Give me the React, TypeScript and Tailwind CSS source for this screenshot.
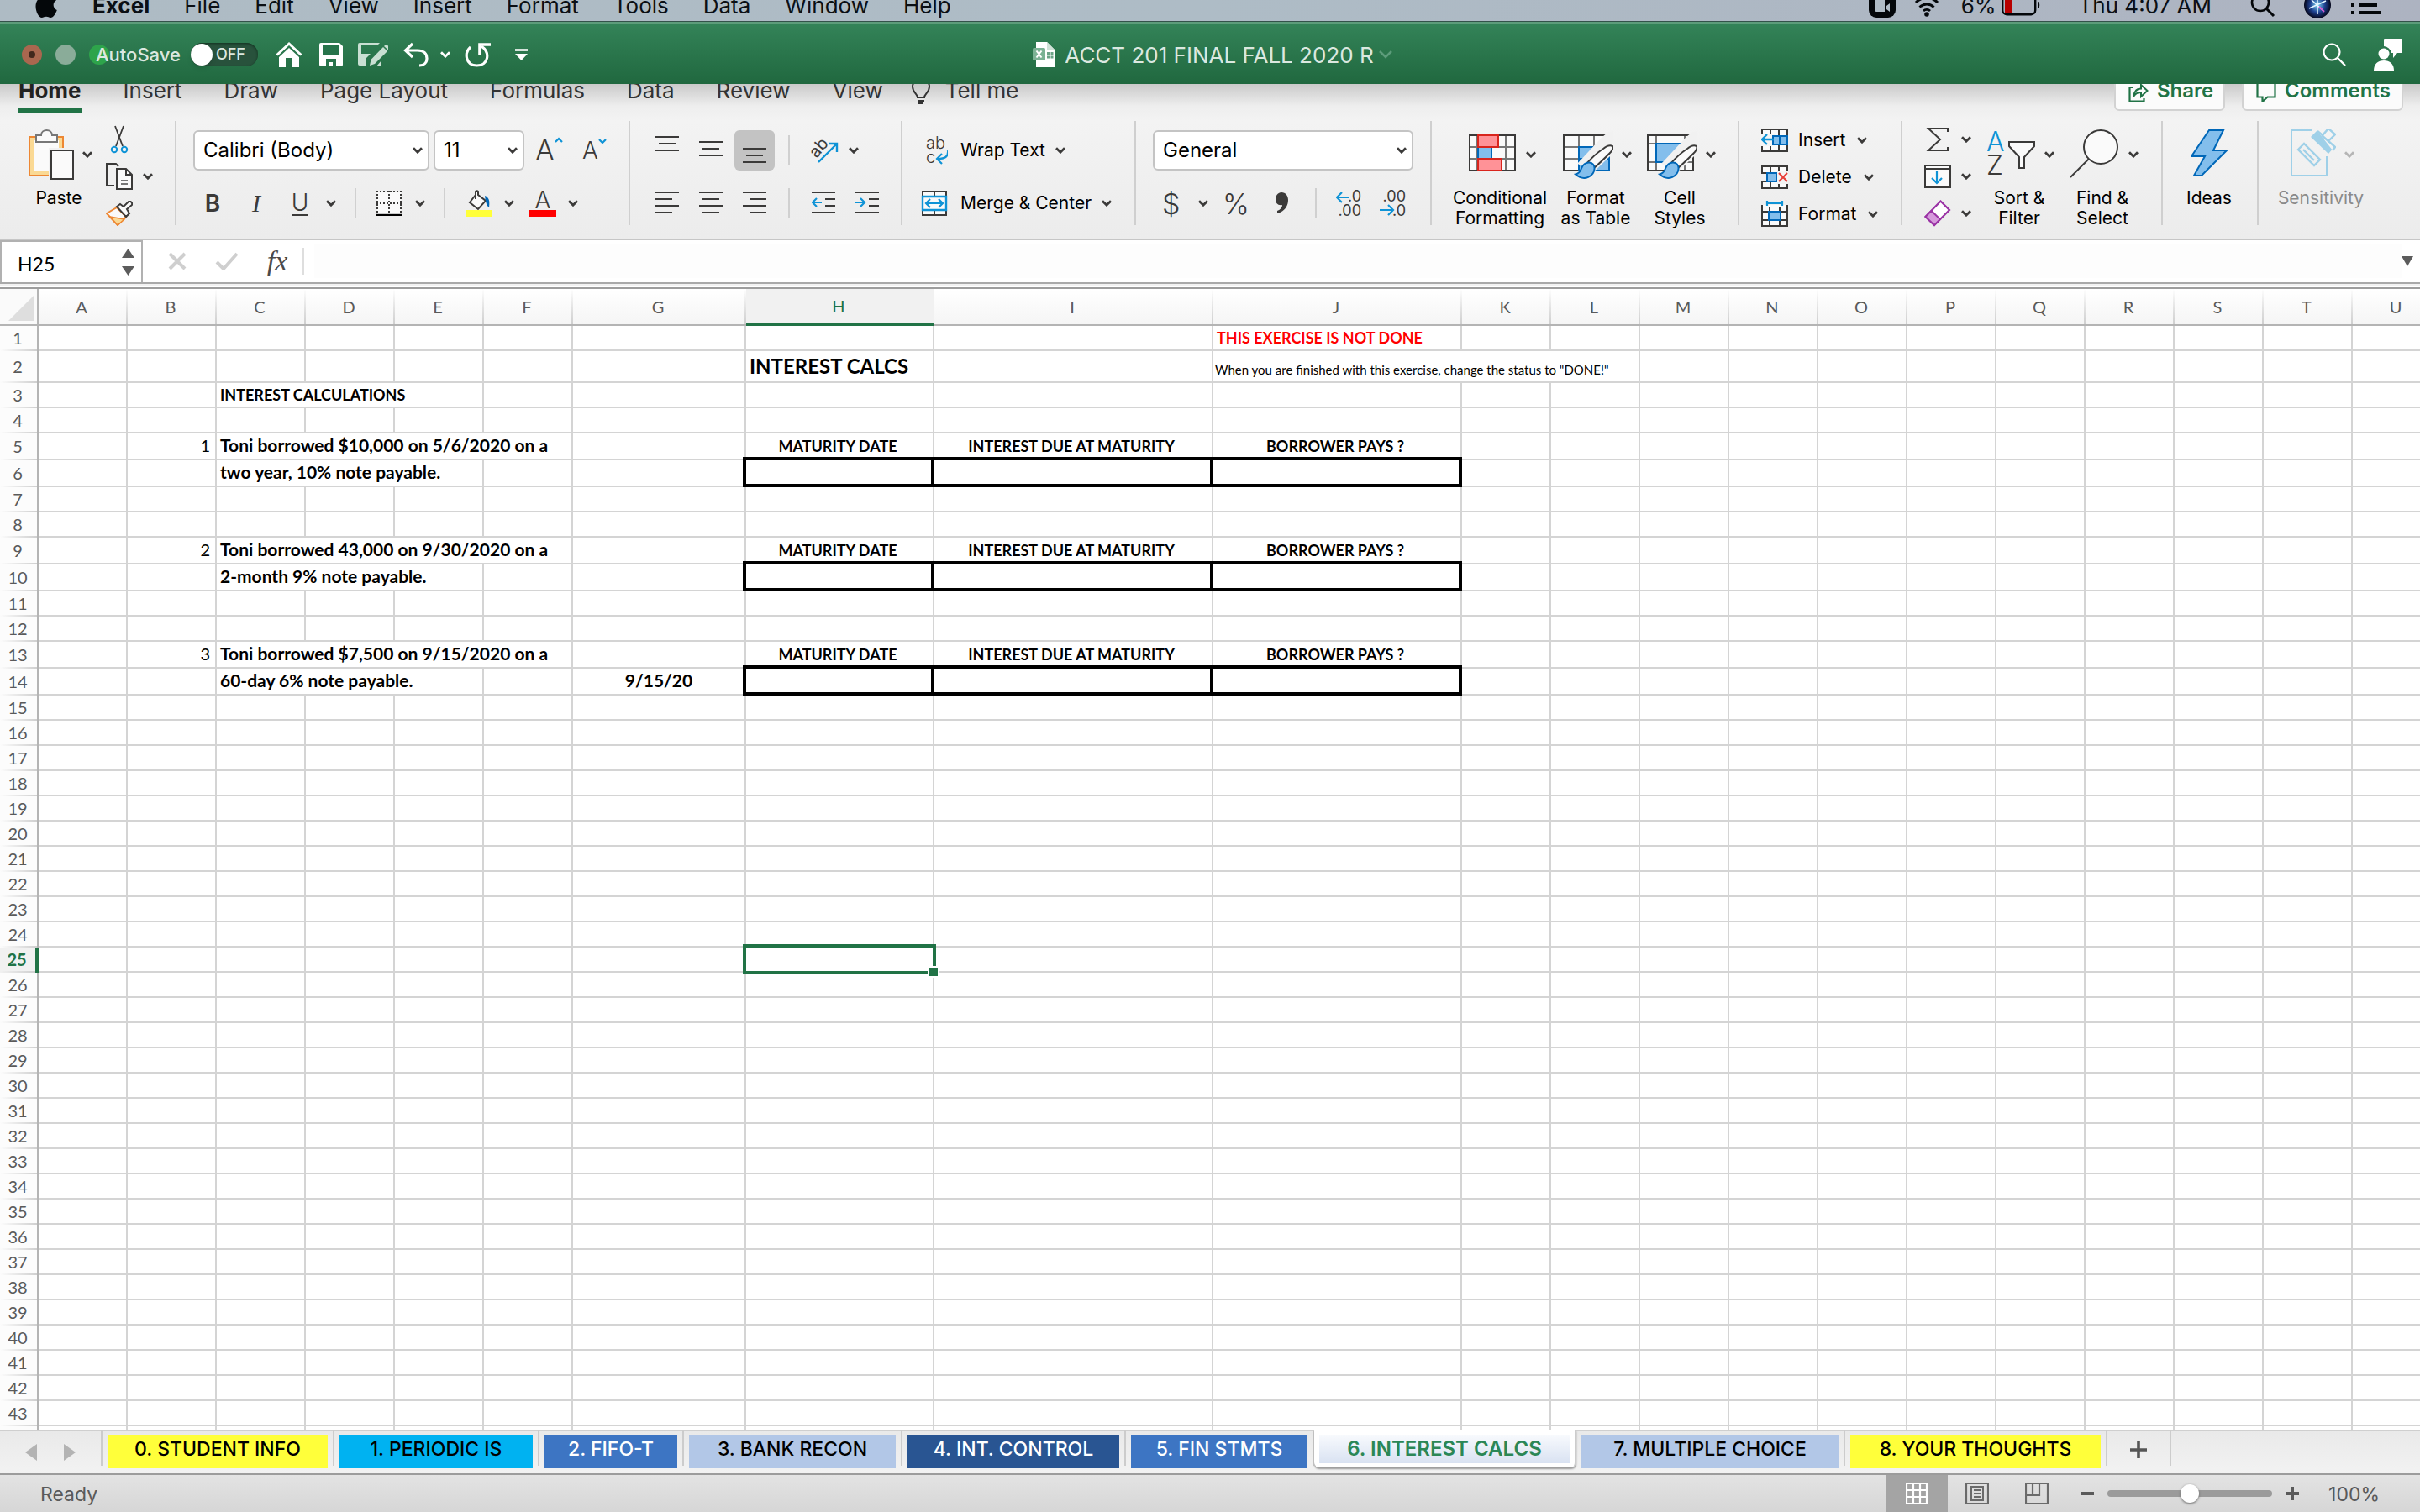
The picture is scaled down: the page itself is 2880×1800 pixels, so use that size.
import React from "react";

const INK = "#3b3a39";
const BLUE = "#0f93d6";
const FILL = "#83beec";
const EDGE = "#0067b8";

type SvgProps = { w: number; h: number; className?: string; children: React.ReactNode };
const Svg = ({ w, h, className = "", children }: SvgProps) => (
  <svg width={w} height={h} viewBox={`0 0 ${w} ${h}`} fill="none" aria-hidden="true" className={"shrink-0 " + className}>
    {children}
  </svg>
);

const Chevron = ({ className = "", color = INK }: { className?: string; color?: string }) => (
  <Svg w={12} h={8} className={className}>
    <path d="M1 1.2 6 6.2 11 1.2" stroke={color} strokeWidth="2.8" />
  </Svg>
);

const Rule = ({ className = "" }: { className?: string }) => (
  <span className={"h-[124px] w-0.5 shrink-0 bg-[#cfcfcf] " + className} />
);
const ShortRule = ({ className = "" }: { className?: string }) => (
  <span className={"h-9 w-0.5 shrink-0 bg-[#d0d0d0] " + className} />
);

/* ---------- system menu bar ---------- */

function MenuBar() {
  return (
    <header className="h-[25px] shrink-0 overflow-hidden bg-linear-to-r from-[#aebbc4] via-[#aebcc6] to-[#adb3c1] text-[26px] text-[#0b0f14]">
      <div className="-mt-4 flex h-11 items-center pr-[46px] pl-[42px]">
        <Svg w={26} h={32} className="mr-[42px]">
          <path
            d="M13 8.5c2 0 3.500-1.500 6-1.500 2.500 0 4.700 1.300 6 3.300-5 3-4.200 9.700.8 11.700-1.300 3.800-4.300 9-7.600 9-2 0-2.800-1.200-5.200-1.200S9.600 31 7.800 31C4.200 31 .5 24 .5 17.500.5 10.800 4.500 7 8.300 7 10.500 7 11.500 8.500 13 8.500zM18 0c.2 3-2.400 6-5.400 6C12.200 3 15 .3 18 0z"
            fill="#04070a"
          />
        </Svg>
        <nav className="flex items-center gap-[41px]">
          <button className="font-bold">Excel</button>
          {["File", "Edit", "View", "Insert", "Format", "Tools", "Data", "Window", "Help"].map((m) => (
            <button key={m}>{m}</button>
          ))}
        </nav>
        <div className="ml-auto flex items-center">
          <Svg w={32} h={32} className="mr-[22px]">
            <rect width="32" height="31" rx="9" fill="#04070a" />
            <path d="M7 9h12v15H9a2 2 0 0 1-2-2zM21 17l4-3v10l-4-3z" fill="#b0bcc6" />
          </Svg>
          <Svg w={30} h={30} className="mr-[26px]">
            <path d="M2 12a18 18 0 0 1 26 0M6.500 17.500a12 12 0 0 1 17 0M11 22a6 6 0 0 1 8 0" stroke="#04070a" strokeWidth="3" />
            <circle cx="15" cy="26" r="2.800" fill="#04070a" />
          </Svg>
          <span className="mr-1.5">6%</span>
          <Svg w={46} h={26} className="mr-[46px]">
            <rect x="1.200" y="1.200" width="39" height="23" rx="5" stroke="#04070a" strokeWidth="2.400" />
            <rect x="4" y="4" width="8" height="18" fill="#b80000" />
            <path d="M43 9c3 1 3 7 0 8z" fill="#04070a" />
          </Svg>
          <time className="mr-[46px]">Thu 4:07 AM</time>
          <Svg w={30} h={30} className="mr-[34px]">
            <circle cx="12" cy="12" r="10" stroke="#04070a" strokeWidth="2.600" />
            <path d="m19 19 9 9" stroke="#04070a" strokeWidth="3" />
          </Svg>
          <Svg w={32} h={32} className="mr-6">
            <defs>
              <radialGradient id="orb">
                <stop offset="0" stopColor="#7fd8f5" />
                <stop offset=".55" stopColor="#1d3f8f" />
                <stop offset="1" stopColor="#05061a" />
              </radialGradient>
            </defs>
            <circle cx="16" cy="16" r="16" fill="url(#orb)" />
            <path d="M6 20 26 11M9 10l14 13M16 5v22" stroke="#e5f6ff" strokeWidth="1.500" />
            <path d="M18 18l6 6" stroke="#d05ad0" strokeWidth="2" />
          </Svg>
          <Svg w={36} h={24}>
            <path d="M0 3h4M0 12h4M0 21h4M9 3h22M9 12h22M9 21h27" stroke="#04070a" strokeWidth="4" />
          </Svg>
        </div>
      </div>
    </header>
  );
}

/* ---------- green title bar ---------- */

function TitleBar() {
  return (
    <div className="flex h-[75px] shrink-0 items-center border-t border-[#33524a] bg-linear-to-b from-[#348459] to-[#20683f] pt-1 pr-5 pl-[26px] text-[#dbe8e0] shadow-[inset_0_2px_0_#5d9c7b]">
      <div className="flex flex-1 items-center">
        <span className="flex size-6 items-center justify-center rounded-full bg-[#a9674f]">
          <span className="size-2 rounded-full bg-[#42281d]" />
        </span>
        <span className="ml-4 size-6 rounded-full bg-[#8aac99]" />
        <span className="ml-4 size-6 rounded-full bg-[#2ea44b]" />
        <label className="-ml-4 flex items-center gap-3 text-[22px] font-medium">
          AutoSave
          <input type="checkbox" className="peer sr-only" />
          <span className="flex h-7 w-20 items-center rounded-full bg-[#28523c] shadow-[inset_0_1px_3px_#12301f]">
            <span className="size-[26px] rounded-full bg-white shadow-md" />
            <span className="ml-1 text-lg">OFF</span>
          </span>
        </label>
        <button aria-label="Home" className="ml-[21px]">
          <Svg w={32} h={32}>
            <path d="M1.500 16.500 16 3l14.500 13.500" stroke="#fff" strokeWidth="3" />
            <path d="M4 19 16 8l12 11v12h-8V20h-8v11H4z" fill="#fff" />
          </Svg>
        </button>
        <button aria-label="Save" className="ml-5">
          <Svg w={28} h={28}>
            <path d="M0 2a2 2 0 0 1 2-2h22l4 4v22a2 2 0 0 1-2 2H2a2 2 0 0 1-2-2z" fill="#fff" />
            <path d="M4 3h20v11H4zM8 19h12v9h-4v-5h-4v5H8z" fill="#27744b" />
          </Svg>
        </button>
        <button aria-label="Save as" className="ml-[18px]">
          <Svg w={36} h={30}>
            <path d="M2 1h24l-3 3H4v10h11l-5 5v9H2a2 2 0 0 1-2-2V3a2 2 0 0 1 2-2z" fill="#c9dfd2" />
            <path d="m14 28 1.500-7L30 6l5 5-15 15z" fill="#c9dfd2" />
            <path d="m31 5 2-2q3 0 3.500 3.500L36 9.500z" fill="#c9dfd2" />
            <path d="M22 29h4a2 2 0 0 0 2-2v-5z" fill="#c9dfd2" />
          </Svg>
        </button>
        <button aria-label="Undo" className="ml-[18px]">
          <Svg w={30} h={30}>
            <path d="M11 2 2.500 10l8.500 8M3 10h14c7 0 11 3.500 11 9.500 0 5-3.500 8.500-9 8.500" stroke="#fff" strokeWidth="3.200" />
          </Svg>
        </button>
        <Chevron color="#fff" className="ml-[14px]" />
        <button aria-label="Redo" className="ml-[17px]">
          <Svg w={32} h={30}>
            <path d="M7 6C-1 13 1 28 14.500 28 28 28 31 13 20 5" stroke="#fff" strokeWidth="3.200" />
            <path d="M18 16V3h13" stroke="#fff" strokeWidth="3.600" />
          </Svg>
        </button>
        <button aria-label="Customize toolbar" className="ml-7">
          <Svg w={15} h={14}>
            <path d="M0 6h15l-7.500 8z" fill="#fff" />
            <path d="M0 1.500h15" stroke="#fff" strokeWidth="2.600" />
          </Svg>
        </button>
      </div>
      <h1 className="flex items-center text-[26px] font-normal">
        <Svg w={26} h={30} className="mr-3">
          <path d="M4 0h13l9 9v21H4z" fill="#fff" />
          <path d="M17 0v9h9z" fill="#cfe2d7" />
          <path d="M17 12h3v3h-3zM21.500 12h3v3h-3zM17 16.500h3v3h-3zM21.500 16.500h3v3h-3z" fill="#6da487" />
          <rect y="7" width="15" height="15" rx="1.500" fill="#7bb294" />
          <path d="m4.500 10.500 6 8M10.500 10.500l-6 8" stroke="#fff" strokeWidth="2" />
        </Svg>
        ACCT 201 FINAL FALL 2020 R
        <Svg w={16} h={10} className="ml-1.5">
          <path d="m1 1 7 7 7-7" stroke="#5d9c7b" strokeWidth="2.500" />
        </Svg>
      </h1>
      <div className="flex flex-1 items-center justify-end">
        <button aria-label="Search">
          <Svg w={28} h={28}>
            <circle cx="11" cy="11" r="9.500" stroke="#fff" strokeWidth="2.200" />
            <path d="m18 18 9 9" stroke="#fff" strokeWidth="2.400" />
          </Svg>
        </button>
        <button aria-label="Account" className="ml-8">
          <Svg w={36} h={38}>
            <path d="M14 1h20a1 1 0 0 1 1 1v15h-6l-5 6v-6h-2a10 10 0 0 0-9-8V2a1 1 0 0 1 1-1z" fill="#fff" />
            <circle cx="13" cy="18" r="6.500" fill="#fff" />
            <path d="M1 38c0-8 5-12 12-12s12 4 12 12z" fill="#fff" />
          </Svg>
        </button>
      </div>
    </div>
  );
}

/* ---------- ribbon ---------- */

function RibbonTabs() {
  return (
    <div className="flex h-11 items-start justify-between overflow-hidden bg-linear-to-b from-[#cacaca] via-[#eeeeee] via-60% to-[#f3f3f3] pr-5 pl-[22px] text-[26px]">
      <nav className="-mt-1.5 flex gap-[50px] leading-7 text-[#333]">
        <button className="border-b-[6px] border-[#217346] pb-1.5 font-bold text-[#222]">Home</button>
        {["Insert", "Draw", "Page Layout", "Formulas", "Data", "Review", "View"].map((t) => (
          <button key={t} className="self-start">
            {t}
          </button>
        ))}
        <button className="-ml-4 flex gap-[18px] self-start">
          <Svg w={22} h={28} className="mt-0.5">
            <path d="M7 20c0-4-6-6-6-13C1 2 5 0 11 0s10 2 10 7c0 7-6 9-6 13zM7 24h8" stroke="#333" strokeWidth="2" />
            <path d="M8 27h6" stroke="#333" strokeWidth="2.500" />
          </Svg>
          Tell me
        </button>
      </nav>
      <div className="-mt-4 flex gap-5 text-2xl font-semibold text-[#217346]">
        <button className="flex h-12 w-[132px] items-end gap-2.5 rounded-md border-2 border-[#d2d2d2] bg-[#fbfbfb] pb-2 pl-[15px] leading-7">
          <Svg w={24} h={24}>
            <path d="M5 6H1.500v16.500h17V19" stroke="#217346" strokeWidth="2.200" />
            <path d="M6 17c1-7 4-9.500 9-9.500V3l7.500 7-7.500 7v-5c-4 0-7 1.500-9 5z" stroke="#217346" strokeWidth="2" />
          </Svg>
          Share
        </button>
        <button className="flex h-12 w-[192px] items-end gap-2.5 rounded-md border-2 border-[#d2d2d2] bg-[#fbfbfb] pb-2 pl-[15px] leading-7">
          <Svg w={24} h={24}>
            <path d="M1.500 0v17.500h6V23l6-5.500h9V0" stroke="#217346" strokeWidth="2.200" />
          </Svg>
          Comments
        </button>
      </div>
    </div>
  );
}

type BigProps = { icon: React.ReactNode; lines: string[]; className: string; chevron?: boolean; muted?: boolean };
function BigButton({ icon, lines, className, chevron = true, muted = false }: BigProps) {
  return (
    <button className={"flex shrink-0 flex-col items-center whitespace-nowrap " + (muted ? "text-[#8a8a8a] " : "") + className}>
      <span className="flex h-20 items-center gap-2.5">
        {icon}
        {chevron && <Chevron color={muted ? "#b5b5b5" : INK} />}
      </span>
      {lines.map((l) => (
        <span key={l} className={"leading-6 " + (chevron ? "pr-1" : "")}>
          {l}
        </span>
      ))}
    </button>
  );
}

function Picker({ label, value, className }: { label: string; value: string; className: string }) {
  return (
    <span className={"relative flex shrink-0 items-center " + className}>
      <select
        aria-label={label}
        defaultValue={value}
        className="h-12 w-full appearance-none rounded-md border-2 border-[#c4c4c4] bg-white pl-2.5 text-2xl text-black"
      >
        <option>{value}</option>
      </select>
      <Chevron className="pointer-events-none absolute right-2" />
    </span>
  );
}

const Lines = ({ d }: { d: string }) => (
  <Svg w={28} h={34}>
    <path d={d} stroke={INK} strokeWidth="2" />
  </Svg>
);

const Brush = () => (
  <>
    <path d="m22 40 26-28c5-5 11-8 12-6s-1 6-6 11L33 46z" fill="#f1f1f1" stroke="#f1f1f1" strokeWidth="6" />
    <path d="M29 42 51 25c4-3 8-5 8.500-4s-.500 4-4 8L38 46z" fill="#fafafa" stroke="#f1f1f1" strokeWidth="5" />
    <path d="M28 41c6-7 14-14 20-18 5-4 9-4 11-3 1 2-1 6-4 9-5 5-11 11-18 17z" fill="#fafafa" stroke={INK} strokeWidth="2" />
    <path d="M15 53.500c4-1 6-4 7-7 2-5 5-7 9-7s7 3 6.500 7.500C37 55 26 63 15 53.500z" fill={FILL} stroke={EDGE} strokeWidth="2" />
  </>
);

function ClipboardGroup() {
  return (
    <>
      <BigButton
        className="w-[76px]"
        lines={["Paste"]}
        icon={
          <Svg w={54} h={60}>
            <path d="M1 9h40v46H1z" fill="#fad994" stroke="#ed8733" strokeWidth="2" />
            <path d="M6 13h30v37H6z" fill="#fafafa" />
            <path d="M9 15V7h6c0-8 13-8 13 0h6v8z" fill="#fafafa" stroke="#777" strokeWidth="2" />
            <path d="M24 22h32v40H24z" fill="#f1f1f1" />
            <path d="M27 25h26v34H27z" fill="#fafafa" stroke={INK} strokeWidth="2" />
          </Svg>
        }
      />
      <div className="ml-4 flex w-14 flex-col">
        <button aria-label="Cut" className="flex h-11 items-center">
          <Svg w={32} h={34}>
            <path d="M11 1 20 25M21 1l-9 24" stroke={INK} strokeWidth="1.800" />
            <circle cx="10" cy="29" r="3.200" stroke={BLUE} strokeWidth="2" />
            <circle cx="22" cy="29" r="3.200" stroke={BLUE} strokeWidth="2" />
          </Svg>
        </button>
        <button aria-label="Copy" className="flex h-11 items-center gap-3">
          <Svg w={32} h={32}>
            <path d="M10 27H1V1h11l3 3" stroke={INK} strokeWidth="2" />
            <path d="M13 7h11l7 7v17H13z" fill="#fafafa" stroke={INK} strokeWidth="2" />
            <path d="M24 7v7h7" stroke={INK} strokeWidth="2" />
            <path d="M18 21h8M18 25h8" stroke="#777" strokeWidth="2" />
          </Svg>
          <Chevron />
        </button>
        <button aria-label="Format painter" className="flex h-11 items-center">
          <Svg w={32} h={30}>
            <path d="M1 15 13 8 24 19 14 29z" fill="#fafafa" stroke="#ed8733" strokeWidth="2" />
            <path d="m5 19 17 3-8 7z" fill="#fad994" stroke="#ed8733" strokeWidth="1.500" />
            <path d="m13 7 4-3 4 3 6-6c2-1 5 1 4 4l-6 5 3 5-4 4z" fill="#fafafa" stroke={INK} strokeWidth="2" />
          </Svg>
        </button>
      </div>
    </>
  );
}

function FontGroup() {
  return (
    <div className="ml-5 flex w-[518px] shrink-0 flex-col">
      <div className="flex h-[70px] items-center">
        <Picker label="Font" value="Calibri (Body)" className="w-[281px]" />
        <Picker label="Font size" value="11" className="ml-[5px] w-[108px]" />
        <button aria-label="Increase font size" className="ml-[13px] flex w-8 text-[34px] leading-8 font-light text-[#3b3a39]">
          A
          <Svg w={10} h={8}>
            <path d="m1 6 4-4 4 4" stroke={BLUE} strokeWidth="2.200" />
          </Svg>
        </button>
        <button aria-label="Decrease font size" className="ml-6 flex w-7 text-[28px] leading-10 font-light text-[#3b3a39]">
          A
          <Svg w={10} h={14}>
            <path d="m1 7 4 4 4-4" stroke={BLUE} strokeWidth="2.200" />
          </Svg>
        </button>
      </div>
      <div className="flex h-14 items-center text-[28px] text-[#3b3a39]">
        <button aria-label="Bold" className="ml-2 w-[30px] font-semibold">B</button>
        <button aria-label="Italic" className="ml-[22px] w-[30px] font-['Liberation_Serif'] text-3xl italic">I</button>
        <button aria-label="Underline" className="ml-[22px] flex w-[30px] flex-col items-center leading-7 font-light">
          <span className="border-b-2 border-[#3b3a39]">U</span>
        </button>
        <Chevron className="ml-4" />
        <ShortRule className="ml-[22px]" />
        <button aria-label="Borders" className="ml-6">
          <Svg w={30} h={30}>
            <path d="M1 1h28v28H1z" fill="#fafafa" />
            <path d="M0 1h30M1 0v28M29 0v28M15 0v28M0 15h30" stroke={INK} strokeWidth="2" strokeDasharray="2 2" />
            <path d="M0 29h30" stroke="#000" strokeWidth="2.400" />
          </Svg>
        </button>
        <Chevron className="ml-4" />
        <ShortRule className="ml-[22px]" />
        <button aria-label="Fill color" className="ml-6">
          <Svg w={32} h={32}>
            <path d="M12 6 5 15l10 8 9-10-9-7V2a2 2 0 0 0-3 0v9" fill="#fafafa" stroke={INK} strokeWidth="2" />
            <path d="M23 7c5 2 6 6 5 14-3-2-4-6-5-14z" fill={EDGE} />
            <path d="M0 24h32v8H0z" fill="#ffff3a" />
          </Svg>
        </button>
        <Chevron className="ml-3.5" />
        <button aria-label="Font color" className="ml-[18px] flex w-8 flex-col items-center leading-6 font-light">
          A
          <span className="h-2 w-8 bg-[#ff0000]" />
        </button>
        <Chevron className="ml-3.5" />
      </div>
    </div>
  );
}

function AlignmentGroup() {
  return (
    <div className="ml-[30px] flex w-[292px] shrink-0 flex-col">
      <div className="flex h-[70px] items-center">
        <button aria-label="Top align"><Lines d="M0 1h28M4 9h20M0 17h28" /></button>
        <button aria-label="Middle align" className="ml-6"><Lines d="M0 7h28M4 15h20M0 23h28" /></button>
        <button aria-label="Bottom align" className="ml-3.5 flex size-12 items-center justify-center rounded-md bg-[#c3c3c3]">
          <Lines d="M0 15h28M4 23h20M0 31h28" />
        </button>
        <ShortRule className="ml-4" />
        <button aria-label="Orientation" className="ml-6">
          <Svg w={34} h={34}>
            <text x="4" y="25" fontSize="20" fill={INK} transform="rotate(-50 8 22)">ab</text>
            <path d="M10 31 31 10M22 9h10v10" stroke={BLUE} strokeWidth="2.400" />
          </Svg>
        </button>
        <Chevron className="ml-3" />
      </div>
      <div className="flex h-14 items-center">
        <button aria-label="Align left"><Lines d="M0 4h28M0 12h20M0 20h28M0 28h20" /></button>
        <button aria-label="Center" className="ml-6"><Lines d="M0 4h28M4 12h20M0 20h28M4 28h20" /></button>
        <button aria-label="Align right" className="ml-6"><Lines d="M0 4h28M8 12h20M0 20h28M8 28h20" /></button>
        <ShortRule className="ml-[26px]" />
        <button aria-label="Decrease indent" className="ml-[26px]">
          <Svg w={28} h={28}>
            <path d="M0 1h28M16 9h12M16 17h12M0 25h28" stroke={INK} strokeWidth="2" />
            <path d="M12 13H1M6 8l-5 5 5 5" stroke={BLUE} strokeWidth="2.200" />
          </Svg>
        </button>
        <button aria-label="Increase indent" className="ml-6">
          <Svg w={28} h={28}>
            <path d="M0 1h28M16 9h12M16 17h12M0 25h28" stroke={INK} strokeWidth="2" />
            <path d="M0 13h11M6 8l5 5-5 5" stroke={BLUE} strokeWidth="2.200" />
          </Svg>
        </button>
      </div>
    </div>
  );
}

function WrapGroup() {
  return (
    <div className="ml-[22px] flex w-[254px] shrink-0 flex-col">
      <button className="flex h-[70px] items-center">
        <Svg w={32} h={34} className="mr-[15px]">
          <text x="6" y="15" fontSize="20" fontWeight="300" fill={INK}>ab</text>
          <text x="6" y="32" fontSize="20" fontWeight="300" fill={INK}>c</text>
          <path d="M32 17c1 8-4 10-12 10M25 21l-6 6 6 6" stroke={BLUE} strokeWidth="2.200" />
        </Svg>
        Wrap Text
        <Chevron className="ml-3" />
      </button>
      <button className="flex h-14 items-center">
        <Svg w={32} h={30} className="mr-[15px]">
          <path d="M2 1h28v28H2zM16 1v28" fill="#fafafa" stroke={INK} strokeWidth="2" />
          <path d="M2 7h28v16H2z" fill="#fafafa" stroke={BLUE} strokeWidth="2.400" />
          <path d="M6 15h20M11 10l-5 5 5 5M21 10l5 5-5 5" stroke={BLUE} strokeWidth="2.200" />
        </Svg>
        Merge &amp; Center
        <Chevron className="ml-3" />
      </button>
    </div>
  );
}

function NumberGroup() {
  return (
    <div className="ml-5 flex w-[330px] shrink-0 flex-col">
      <div className="flex h-[70px] items-center">
        <Picker label="Number format" value="General" className="w-[310px]" />
      </div>
      <div className="flex h-14 items-center text-[34px] font-light text-[#3b3a39]">
        <button aria-label="Currency" className="ml-[11px] w-5">$</button>
        <Chevron className="ml-[23px]" />
        <button aria-label="Percent" className="ml-[17px] w-8">%</button>
        <button aria-label="Comma style" className="ml-[30px]">
          <Svg w={16} h={28}>
            <path d="M8 1c5 0 8 4 8 9 0 8-5 14-13 16v-3c4-1.500 6-4 6-7-5 1-8-2-8-7 0-4 3-8 7-8z" fill={INK} />
          </Svg>
        </button>
        <ShortRule className="ml-8" />
        <button aria-label="Increase decimal" className="ml-[23px]">
          <Svg w={32} h={32}>
            <text x="30" y="14" fontSize="18" textAnchor="end" fill={INK} fontWeight="400">.0</text>
            <text x="30" y="31" fontSize="18" textAnchor="end" fill={INK} fontWeight="400">.00</text>
            <path d="M15 9H1M7 3 1 9l6 6" stroke={BLUE} strokeWidth="2.200" />
          </Svg>
        </button>
        <button aria-label="Decrease decimal" className="ml-5">
          <Svg w={32} h={32}>
            <text x="31" y="14" fontSize="18" textAnchor="end" fill={INK} fontWeight="400">.00</text>
            <text x="31" y="31" fontSize="18" textAnchor="end" fill={INK} fontWeight="400">.0</text>
            <path d="M0 24h15M10 18l6 6-6 6" stroke={BLUE} strokeWidth="2.200" />
          </Svg>
        </button>
      </div>
    </div>
  );
}

function StylesGroup() {
  return (
    <>
      <BigButton
        className="ml-[27px] w-[112px]"
        lines={["Conditional", "Formatting"]}
        icon={
          <Svg w={60} h={60}>
            <path d="M3 7h54v42H3z" fill="#fafafa" />
            <path d="M2 21h56M2 35h56M12 7v42M46 7v42" stroke="#777" strokeWidth="2" />
            <path d="M3 7h54v42H3z" stroke={INK} strokeWidth="2" />
            <path d="M13 21h16v14H13z" fill={FILL} stroke={EDGE} strokeWidth="2" />
            <path d="M13 7h24v14H13zM13 35h28v14H13z" fill="#ff9297" stroke="#d9251d" strokeWidth="2" />
          </Svg>
        }
      />
      <BigButton
        className="ml-[17px] w-[82px]"
        lines={["Format", "as Table"]}
        icon={
          <Svg w={60} h={60}>
            <path d="M1 7h54v42H1z" fill="#fafafa" />
            <path d="M0 21h54M0 35h20M19 7v42M37 7v14" stroke="#777" strokeWidth="2" />
            <path d="M20 49H1V7h54v14" stroke={INK} strokeWidth="2" />
            <path d="M19 21h36v28H19zM37 21v28M19 35h36" fill={FILL} stroke={EDGE} strokeWidth="2" />
            <Brush />
          </Svg>
        }
      />
      <BigButton
        className="ml-[18px] w-[82px]"
        lines={["Cell", "Styles"]}
        icon={
          <Svg w={60} h={60}>
            <path d="M1 7h54v42H1z" fill="#fafafa" />
            <path d="M0 17h54M0 39h54M11 7v42M45 7v42" stroke="#777" strokeWidth="2" />
            <path d="M1 7h54v42H1z" stroke={INK} strokeWidth="2" />
            <path d="M11 17h34v22H11z" fill={FILL} stroke={EDGE} strokeWidth="2" />
            <Brush />
          </Svg>
        }
      />
    </>
  );
}

function CellsGroup() {
  return (
    <div className="ml-[26px] flex w-[166px] shrink-0 flex-col pt-px">
      <button className="flex h-11 items-center">
        <Svg w={32} h={28} className="mr-3">
          <path d="M1 1h30v26H1zM11 1v26M21 1v26M1 9h30M1 19h30" fill="#fafafa" stroke={INK} strokeWidth="2" />
          <path d="M0 6h16v15H0z" fill="#f4f4f4" />
          <path d="M14 9h17v10H14zM22 9v10" fill={FILL} stroke={EDGE} strokeWidth="2" />
          <path d="M15 13H1M7 7l-6 6 6 6" stroke={BLUE} strokeWidth="2.400" />
        </Svg>
        Insert
        <Chevron className="ml-3.5" />
      </button>
      <button className="flex h-11 items-center">
        <Svg w={32} h={28} className="mr-3">
          <path d="M1 9V1h30v8zM1 19v8h30v-8zM11 1v8M21 1v8M11 19v8M21 19v8" fill="#fafafa" stroke={INK} strokeWidth="2" />
          <path d="M7 9h11v10H7z" fill={FILL} stroke={EDGE} strokeWidth="2" />
          <path d="M19 6h13v16H19z" fill="#f4f4f4" />
          <path d="m21 9 10 10M31 9 21 19" stroke="#e8403a" strokeWidth="2.200" />
        </Svg>
        Delete
        <Chevron className="ml-3.5" />
      </button>
      <button className="flex h-11 items-center">
        <Svg w={32} h={32} className="mr-3">
          <path d="M1 5v25h30V5M1 13h30M1 23h30M10 8v22M22 8v22" fill="#fafafa" stroke={INK} strokeWidth="2" />
          <path d="M9 13h14v10H9z" fill={FILL} stroke={EDGE} strokeWidth="2" />
          <path d="M7 3h18M7 0v6M25 0v6" stroke={BLUE} strokeWidth="2.200" />
        </Svg>
        Format
        <Chevron className="ml-3.5" />
      </button>
    </div>
  );
}

function EditingGroup() {
  return (
    <>
      <div className="ml-[26px] flex w-14 shrink-0 flex-col">
        <button aria-label="AutoSum" className="flex h-11 items-center gap-3">
          <Svg w={32} h={28}>
            <path d="M28 5V1H5l14 13L5 27h23v-4" stroke={INK} strokeWidth="2" />
          </Svg>
          <Chevron />
        </button>
        <button aria-label="Fill" className="flex h-11 items-center gap-3">
          <Svg w={32} h={28}>
            <path d="M1 1h30v26H1zM1 5h30" fill="#fafafa" stroke={INK} strokeWidth="2" />
            <path d="M15 8v14M9 16l6 6 6-6" stroke={BLUE} strokeWidth="2.200" />
          </Svg>
          <Chevron />
        </button>
        <button aria-label="Clear" className="flex h-11 items-center gap-3">
          <Svg w={32} h={32}>
            <path d="m1.500 20 18-18.500L30 12 12 30z" fill="#fff" stroke="#9a33a5" strokeWidth="2.200" />
            <path d="m1.500 20 7-7L19 23l-7 7z" fill="#d69bdc" stroke="#9a33a5" strokeWidth="2" />
          </Svg>
          <Chevron />
        </button>
      </div>
      <BigButton
        className="ml-[18px] w-[82px]"
        lines={["Sort &", "Filter"]}
        icon={
          <Svg w={58} h={60}>
            <text x="-1" y="26" fontSize="32" fontWeight="300" fill={BLUE}>A</text>
            <text x="-1" y="54" fontSize="32" fontWeight="300" fill={INK}>Z</text>
            <path d="M26 15h30v5L44 33v13h-6V33L26 20z" fill="#fafafa" stroke={INK} strokeWidth="2" />
          </Svg>
        }
      />
      <BigButton
        className="ml-4 w-[84px]"
        lines={["Find &", "Select"]}
        icon={
          <Svg w={60} h={60}>
            <circle cx="37" cy="21" r="20" fill="#fafafa" stroke={INK} strokeWidth="2" />
            <path d="M23 35 1 57" stroke={INK} strokeWidth="2" />
          </Svg>
        }
      />
    </>
  );
}

function Ribbon() {
  return (
    <section className="shrink-0 border-b-2 border-[#c6c6c6] bg-[#efefef]">
      <RibbonTabs />
      <div className="flex h-[140px] items-start bg-linear-to-b from-[#f3f3f3] to-[#ececec] pl-[34px] text-[21px] text-black">
        <ClipboardGroup />
        <Rule className="ml-[26px]" />
        <FontGroup />
        <Rule />
        <AlignmentGroup />
        <Rule />
        <WrapGroup />
        <Rule />
        <NumberGroup />
        <Rule />
        <StylesGroup />
        <Rule className="ml-[26px]" />
        <CellsGroup />
        <Rule />
        <EditingGroup />
        <Rule className="ml-[26px]" />
        <BigButton
          className="ml-[27px] w-14"
          lines={["Ideas"]}
          chevron={false}
          icon={
            <Svg w={44} h={60}>
              <path d="M22 1h17L27 25h16L13 55H4l13-23H1z" fill={FILL} stroke={EDGE} strokeWidth="2" />
            </Svg>
          }
        />
        <Rule className="ml-[29px]" />
        <BigButton
          className="ml-6 w-[104px]"
          lines={["Sensitivity"]}
          muted
          icon={
            <Svg w={54} h={60}>
              <path d="M25 1H1v54h42V32" stroke="#9fd0e8" strokeWidth="2" />
              <path d="m9 24 7-7 19 19-7 7zM15 24l13 13" stroke="#9fd0e8" strokeWidth="2.400" />
              <path d="m24 9 7-7 21 19-7 8z" fill="#9fd0e8" />
              <path d="m32 2 6 5 7-8 8 7-8 8 8 7-3 4M37 7l9 8" stroke="#9fd0e8" strokeWidth="2.400" fill="#f4f4f4" />
            </Svg>
          }
        />
      </div>
    </section>
  );
}

/* ---------- formula bar ---------- */

function FormulaBar() {
  return (
    <div className="flex h-[58px] shrink-0 items-stretch border-b-2 border-[#9d9d9d] bg-white">
      <div className="mb-1 flex flex-1 items-center border-b-2 border-[#a9a9a9] shadow-[0_2px_0_#f2f2f2]">
        <div className="flex h-full w-[170px] items-center justify-between border-2 border-b-0 border-[#b1b1b1] pr-2 pl-[19px]">
          <input aria-label="Name box" defaultValue="H25" className="w-24 bg-transparent pt-1 font-['Lato'] text-[23px] text-black" />
          <span className="flex flex-col gap-2.5">
            <Svg w={15} h={11}><path d="M7.500 0 15 11H0z" fill="#5c5c5c" /></Svg>
            <Svg w={15} h={11}><path d="M7.500 11 0 0h15z" fill="#5c5c5c" /></Svg>
          </span>
        </div>
        <button aria-label="Cancel" className="ml-[30px]">
          <Svg w={22} h={22}><path d="m2 2 18 18M20 2 2 20" stroke="#cfcfcf" strokeWidth="4" /></Svg>
        </button>
        <button aria-label="Enter" className="ml-[34px]">
          <Svg w={28} h={22}><path d="m2 12 8 8L26 2" stroke="#cfcfcf" strokeWidth="4" /></Svg>
        </button>
        <button aria-label="Insert function" className="ml-8 w-7 font-['Liberation_Serif'] text-[34px] leading-8 text-[#4a4a4a] italic">
          fx
        </button>
        <span className="ml-4 h-8 w-0.5 bg-[#dedede]" />
        <input aria-label="Formula" className="ml-3 h-10 flex-1 bg-[#fdfdfd]" />
        <button aria-label="Expand formula bar" className="mr-2">
          <Svg w={14} h={12}><path d="M7 12 0 0h14z" fill="#5c5c5c" /></Svg>
        </button>
      </div>
    </div>
  );
}

/* ---------- worksheet ---------- */

const COLUMNS: [string, string][] = [
  ["A", "w-[106px]"], ["B", "w-[106px]"], ["C", "w-[106px]"], ["D", "w-[106px]"], ["E", "w-[106px]"], ["F", "w-[106px]"],
  ["G", "w-[206px]"], ["H", "w-[224px]"], ["I", "w-[332px]"], ["J", "w-[296px]"], ["K", "w-[106px]"], ["L", "w-[106px]"],
  ["M", "w-[106px]"], ["N", "w-[106px]"], ["O", "w-[106px]"], ["P", "w-[106px]"], ["Q", "w-[106px]"], ["R", "w-[106px]"],
  ["S", "w-[106px]"], ["T", "w-[106px]"], ["U", "w-[106px]"],
];

type Cell = { text?: string; span?: number; style?: string; kind?: "boxed" | "active" };

const NOTE = "pl-1 pb-1 text-[21px] font-bold";
const CAPS = "pl-1 text-lg font-bold";
const HEAD = "pr-1 text-center text-lg font-bold";
const COUNT = "pr-1.5 pb-0.5 text-right text-xl";

const headings = { H: { text: "MATURITY DATE", style: HEAD }, I: { text: "INTEREST DUE AT MATURITY", style: HEAD }, J: { text: "BORROWER PAYS ?", style: HEAD } };
const boxes: Record<string, Cell> = { H: { kind: "boxed" }, I: { kind: "boxed" }, J: { kind: "boxed" } };

const CELLS: Record<number, Record<string, Cell>> = {
  1: { J: { text: "THIS EXERCISE IS NOT DONE", style: CAPS + " text-[#ff0000]" } },
  2: {
    H: { text: "INTEREST CALCS", style: "pl-1 text-[24px] font-bold" },
    J: { text: 'When you are finished with this exercise, change the status to "DONE!"', span: 3, style: "pl-0.5 pt-2 text-[15px]" },
  },
  3: { C: { text: "INTEREST CALCULATIONS", span: 3, style: CAPS } },
  5: { B: { text: "1", style: COUNT }, C: { text: "Toni borrowed $10,000 on 5/6/2020 on a", span: 4, style: NOTE }, ...headings },
  6: { C: { text: "two year, 10% note payable.", span: 3, style: NOTE }, ...boxes },
  9: { B: { text: "2", style: COUNT }, C: { text: "Toni borrowed 43,000 on 9/30/2020 on a", span: 4, style: NOTE }, ...headings },
  10: { C: { text: "2-month 9% note payable.", span: 3, style: NOTE }, ...boxes },
  13: { B: { text: "3", style: COUNT }, C: { text: "Toni borrowed $7,500 on 9/15/2020 on a", span: 4, style: NOTE }, ...headings },
  14: {
    C: { text: "60-day 6% note payable.", span: 3, style: NOTE },
    G: { text: "9/15/20", style: "pb-1 text-center text-[21px] font-bold" },
    ...boxes,
  },
  25: { H: { kind: "active" } },
};

const TALL = [5, 6, 9, 10, 13, 14];
const rowHeight = (n: number) => (n === 2 ? "h-[38px]" : TALL.includes(n) ? "h-8" : "h-[30px]");

function SheetRow({ n }: { n: number }) {
  const row = CELLS[n] ?? {};
  const cells: React.ReactNode[] = [];
  for (let i = 0; i < COLUMNS.length; i++) {
    const name = COLUMNS[i][0];
    const c = row[name] ?? {};
    const border = c.kind === "boxed" ? "border-0" : "border-r-2 border-b-2 border-[#d4d4d4]";
    cells.push(
      <td key={name} colSpan={c.span ?? 1} className={"relative p-0 align-middle leading-none whitespace-nowrap " + border + " " + (c.style ?? "")}>
        {c.text}
        {c.kind === "boxed" && <span className="absolute -top-1 right-0 bottom-0 -left-1 z-10 border-4 border-black" />}
        {c.kind === "active" && (
          <span className="absolute -top-1 -right-1 -bottom-1 -left-1 z-10 border-4 border-[#217346]">
            <span className="absolute -right-[8px] -bottom-[8px] size-3.5 border-2 border-white bg-[#217346]" />
          </span>
        )}
      </td>,
    );
    i += (c.span ?? 1) - 1;
  }
  const selected = n === 25;
  return (
    <tr className={rowHeight(n)}>
      <th
        scope="row"
        className={
          "bg-[linear-gradient(to_right,transparent,#cfcfcf)] bg-[length:100%_2px] bg-bottom bg-no-repeat p-0 pr-0.5 pb-0.5 text-center text-xl leading-none " +
          (selected ? "border-r-4 border-[#217346] bg-[#f1f1f1] font-bold text-[#217346]" : "border-r-2 border-[#b4b4b4] bg-[#fcfcfc] font-normal text-[#5a5a5a]")
        }
      >
        {n < 44 ? n : ""}
      </th>
      {cells}
    </tr>
  );
}

function Sheet() {
  return (
    <main className="min-h-0 flex-1 overflow-hidden bg-white font-['Lato'] text-black">
      <table className="w-full table-fixed border-separate border-spacing-0">
        <colgroup>
          <col className="w-[46px]" />
          {COLUMNS.map(([name, w]) => (
            <col key={name} className={w} />
          ))}
        </colgroup>
        <thead>
          <tr className="h-11">
            <th className="border-r-2 border-b-2 border-[#b4b4b4] bg-[#fafafa] p-0 align-bottom">
              <Svg w={30} h={30} className="mb-1 ml-2.5">
                <path d="M30 0v30H0z" fill="#dedede" />
              </Svg>
            </th>
            {COLUMNS.map(([name]) => (
              <th
                key={name}
                scope="col"
                className={
                  "p-0 pr-1 text-center text-xl leading-none font-normal " +
                  (name === "H"
                    ? "border-b-4 border-[#217346] bg-[#f1f1f1] text-[#217346]"
                    : "border-b-2 border-[#b4b4b4] bg-[linear-gradient(to_bottom,transparent,#cfcfcf),linear-gradient(to_bottom,#ffffff,#f5f5f5)] bg-[length:2px_100%,100%_100%] bg-right bg-no-repeat text-[#5a5a5a]")
                }
              >
                {name}
              </th>
            ))}
          </tr>
        </thead>
        <tbody>
          {Array.from({ length: 44 }, (_, i) => (
            <SheetRow key={i} n={i + 1} />
          ))}
        </tbody>
      </table>
    </main>
  );
}

/* ---------- sheet tabs and status bar ---------- */

const TABS: [string, string][] = [
  ["0. STUDENT INFO", "w-[262px] bg-[#ffff3a] text-black"],
  ["1. PERIODIC IS", "w-[230px] bg-[#00b2f1] text-black"],
  ["2. FIFO-T", "w-[158px] bg-[#3d75c3] text-white"],
  ["3. BANK RECON", "w-[246px] bg-[#b2c7e7] text-black"],
  ["4. INT. CONTROL", "w-[252px] bg-[#295592] text-white"],
  ["5. FIN STMTS", "w-[210px] bg-[#3d75c3] text-white"],
  ["6. INTEREST CALCS", "active"],
  ["7. MULTIPLE CHOICE", "w-[306px] bg-[#b2c7e7] text-black"],
  ["8. YOUR THOUGHTS", "w-[298px] bg-[#ffff3a] text-black"],
];

function SheetTabs() {
  return (
    <nav className="flex h-[52px] shrink-0 items-start bg-linear-to-b from-[#e9e9e9] to-[#f2f2f2] text-[23px] font-medium shadow-[inset_0_2px_0_#cfcfcf]">
      <button aria-label="Previous sheet" className="mt-[17px] ml-[30px]">
        <Svg w={14} h={20}><path d="M14 0v20L0 10z" fill="#b3b3b3" /></Svg>
      </button>
      <button aria-label="Next sheet" className="mt-[17px] ml-8">
        <Svg w={14} h={20}><path d="M0 0v20l14-10z" fill="#b3b3b3" /></Svg>
      </button>
      <span className="ml-[30px] h-[43px] w-0.5 bg-[#cccccc]" />
      {TABS.map(([name, look]) =>
        look === "active" ? (
          <div key={name} className="h-[45px] rounded-b-md border-r-2 border-[#cccccc] bg-white px-1.5 pt-1.5 shadow-[0_2px_2px_#9a9a9a]">
            <button className="h-[34px] w-[298px] bg-linear-to-b from-[#f8fafd] to-[#d9e2f2] text-2xl leading-[34px] font-semibold text-[#2b8756]">
              {name}
            </button>
          </div>
        ) : (
          <div key={name} className="h-[43px] border-r-2 border-[#cccccc] px-1.5 pt-1.5">
            <button className={"h-10 pb-1.5 leading-[34px] whitespace-nowrap " + look}>{name}</button>
          </div>
        ),
      )}
      <button aria-label="Add sheet" className="flex h-[43px] w-[76px] items-center justify-center border-r-2 border-[#cccccc] pt-1">
        <Svg w={20} h={20}><path d="M10 0v20M0 10h20" stroke="#555" strokeWidth="3.600" /></Svg>
      </button>
    </nav>
  );
}

function StatusBar() {
  return (
    <footer className="flex h-[46px] shrink-0 items-center justify-between border-t-2 border-[#9c9c9c] bg-linear-to-b from-[#e3e3e3] to-[#d6d6d6] pr-12 pl-12 text-[23px] text-[#5a5a5a]">
      <span className="pt-0.5">Ready</span>
      <div className="flex h-full items-center">
        <button aria-label="Normal view" className="flex h-full w-[74px] items-center justify-center bg-[#a4a4a4]">
          <Svg w={26} h={26}>
            <path d="M1 1h24v24H1zM9 1v24M17 1v24M1 9h24M1 17h24" stroke="#fff" strokeWidth="2.200" />
          </Svg>
        </button>
        <button aria-label="Page layout view" className="ml-[21px]">
          <Svg w={28} h={26}>
            <path d="M1 1h26v24H1z" stroke="#6a6a6a" strokeWidth="2.200" />
            <path d="M7 5h14v16H7zM10 9h8M10 13h8M10 17h8" stroke="#6a6a6a" strokeWidth="2" />
          </Svg>
        </button>
        <button aria-label="Page break view" className="ml-[43px]">
          <Svg w={28} h={26}>
            <path d="M1 1h26v24H1zM1 15h16V1M9 1v14" stroke="#6a6a6a" strokeWidth="2.200" />
          </Svg>
        </button>
        <button aria-label="Zoom out" className="ml-[38px]">
          <Svg w={16} h={16}><path d="M0 8h16" stroke="#5a5a5a" strokeWidth="4" /></Svg>
        </button>
        <input
          type="range"
          aria-label="Zoom"
          defaultValue={50}
          className="mx-4 h-2 w-[196px] appearance-none rounded-full bg-[#9b9b9b] [&::-webkit-slider-thumb]:size-[22px] [&::-webkit-slider-thumb]:appearance-none [&::-webkit-slider-thumb]:rounded-full [&::-webkit-slider-thumb]:bg-white [&::-webkit-slider-thumb]:shadow-[0_1px_3px_#666]"
        />
        <button aria-label="Zoom in">
          <Svg w={16} h={16}><path d="M8 0v16M0 8h16" stroke="#5a5a5a" strokeWidth="4" /></Svg>
        </button>
        <span className="ml-[35px] pt-0.5">100%</span>
      </div>
    </footer>
  );
}

export default function App() {
  return (
    <div className="flex h-screen w-full flex-col overflow-hidden bg-white font-['Inter',sans-serif]">
      <MenuBar />
      <TitleBar />
      <Ribbon />
      <FormulaBar />
      <Sheet />
      <SheetTabs />
      <StatusBar />
    </div>
  );
}
